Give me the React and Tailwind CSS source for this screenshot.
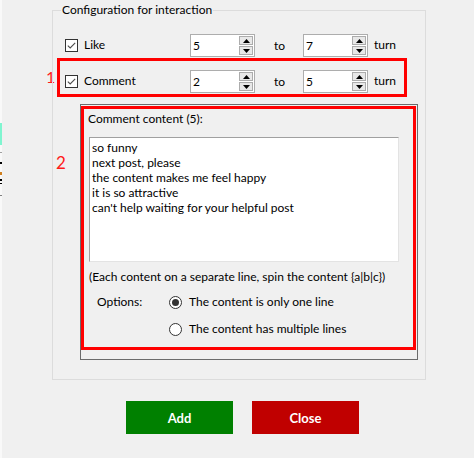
import React from 'react';

const comments = [
  'so funny',
  'next post, please',
  'the content makes me feel happy',
  'it is so attractive',
  "can't help waiting for your helpful post",
];

function CheckBox() {
  return (
    <span className="flex h-[13px] w-[13px] shrink-0 items-center justify-center border border-[#333333] bg-white">
      <svg width="11" height="11" viewBox="0 0 11 11">
        <path d="M1.8 5.6 L4.2 8 L9.2 2.8" fill="none" stroke="#4d4d4d" strokeWidth="1.1" />
      </svg>
    </span>
  );
}

function Arrow({ up }) {
  return (
    <span className="flex h-[9px] w-[14px] items-center justify-center border border-[#acacac] bg-[#e8e8e8]">
      <svg width="7" height="4" viewBox="0 0 7 4">
        <path d={up ? 'M3.5 0 L7 4 L0 4 Z' : 'M0 0 L7 0 L3.5 4 Z'} fill="#000" />
      </svg>
    </span>
  );
}

function SpinBox({ value }) {
  return (
    <div className="flex h-[23px] w-[65px] shrink-0 items-center justify-between border border-[#adadad] bg-white pl-[2px] pr-[1px]">
      <span>{value}</span>
      <div className="flex flex-col gap-[1px]">
        <Arrow up />
        <Arrow />
      </div>
    </div>
  );
}

function Row({ label, from, to }) {
  return (
    <div className="flex h-[23px] items-center">
      <div className="flex w-[125px] items-center gap-[6px]">
        <CheckBox />
        <span className="-mt-[2px]">{label}</span>
      </div>
      <SpinBox value={from} />
      <span className="w-[48px] pl-[19px]">to</span>
      <SpinBox value={to} />
      <span className="ml-[6px] -mt-[1px]">turn</span>
    </div>
  );
}

function Radio({ checked }) {
  return (
    <span className="flex h-[13px] w-[13px] shrink-0 items-center justify-center rounded-full border border-[#333333] bg-white">
      {checked && <span className="h-[7px] w-[7px] rounded-full bg-[#333333]" />}
    </span>
  );
}

export default function App() {
  return (
    <div className="flex h-[458px] w-[474px] overflow-hidden bg-[#f0f0f0] font-['Lato',sans-serif] text-[12px] leading-[16px] text-black">
      {/* edge of the window behind */}
      <div className="flex w-[2px] shrink-0 flex-col bg-[#f9f9f9]">
        <div className="mt-[123px] h-[22px] bg-[#80f5d0]" />
        <div className="mt-[7px] h-[1px] bg-[#a0a0a0]" />
        <div className="mt-[9px] h-[2px] bg-black" />
        <div className="mt-[8px] h-[3px] bg-[#d08020]" />
        <div className="mt-[4px] h-[2px] bg-black" />
        <div className="mt-[2px] h-[1px] bg-black" />
        <div className="mt-[11px] h-[1px] bg-[#808080]" />
      </div>

      <div className="relative flex flex-col">
        <span className="absolute left-[44px] top-[69px] text-[16px] leading-[16px] text-[#ff1a1a]">1</span>
        <span className="absolute left-[54px] top-[155px] text-[17px] leading-[16px] text-[#ff1a1a]">2</span>

        <div className="relative ml-[50px] mt-[10px] h-[370px] w-[374px] border border-[#dcdcdc]">
          <span className="absolute left-[8px] top-[-9px] whitespace-nowrap bg-[#f0f0f0] px-[1px]">Configuration for interaction</span>

          <div className="ml-[12px] mt-[23px]">
            <Row label="Like" from="5" to="7" />
          </div>

          <div className="ml-[4px] mt-[1px] h-[39px] w-[350px] border-[3px] border-[#ff0000] pl-[5px] pt-[9px]">
            <Row label="Comment" from="2" to="5" />
          </div>

          <div className="ml-[27px] mt-[7px] h-[256px] w-[338px] border border-[#6b6b6b] pt-[1px]">
            <div className="h-[244px] w-[335px] border-[3px] border-[#ff0000]">
              <div className="ml-[4px] mt-[2px]">Comment content (5):</div>
              <div className="ml-[5px] mt-[10px] h-[125px] w-[310px] border border-b-[#e3e3e3] border-l-[#a0a0a0] border-r-[#e3e3e3] border-t-[#a0a0a0] bg-white pl-[2px] pt-[2px] leading-[15px]">
                {comments.map((c) => (
                  <div key={c}>{c}</div>
                ))}
              </div>
              <div className="ml-[5px] mt-[7px] whitespace-nowrap">(Each content on a separate line, spin the content {'{a|b|c}'})</div>
              <div className="mt-[9px] flex h-[16px] items-center">
                <span className="w-[85px] pl-[13px]">Options:</span>
                <Radio checked />
                <span className="ml-[7px]">The content is only one line</span>
              </div>
              <div className="ml-[85px] mt-[11px] flex h-[16px] items-center">
                <Radio />
                <span className="ml-[7px]">The content has multiple lines</span>
              </div>
            </div>
          </div>
        </div>

        <div className="ml-[124px] mt-[21px] flex gap-[19px]">
          <button className="h-[33px] w-[107px] bg-[#008000] text-[13px] font-bold text-white">Add</button>
          <button className="h-[33px] w-[107px] bg-[#c00000] text-[13px] font-bold text-white">Close</button>
        </div>
      </div>
    </div>
  );
}
